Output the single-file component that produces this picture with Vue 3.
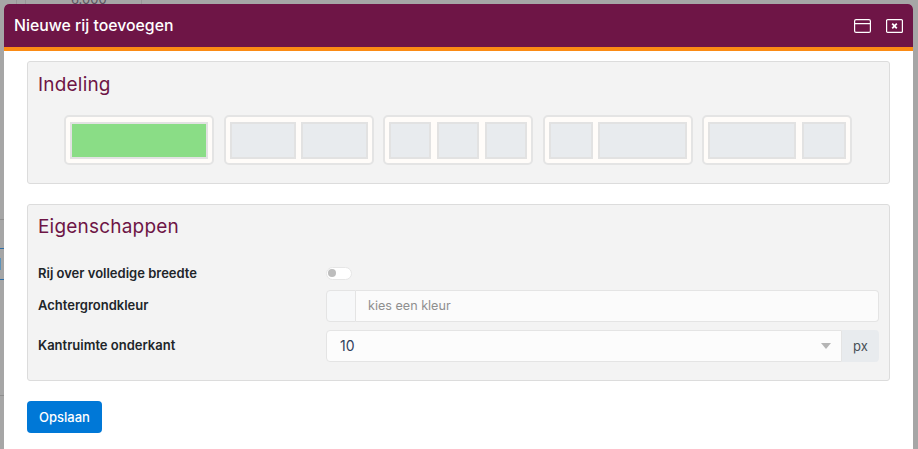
<template>
  <div class="page">
    <div class="backdrop">
      <span class="bg-line line-a"></span>
      <span class="bg-line line-b"></span>
      <span class="bg-line line-c"></span>
      <span class="bg-text">6.000</span>
      <span class="bg-rule rule-a"></span>
      <span class="bg-rule rule-b"></span>
      <span class="bg-rule rule-c blue"></span>
      <span class="bg-rule rule-d blue"></span>
      <span class="bg-mark"></span>
    </div>
    <div class="modal">
      <div class="modal-header">
        <span class="modal-title">Nieuwe rij toevoegen</span>
        <div class="modal-actions">
          <svg width="17" height="14" viewBox="0 0 17 14" fill="none" stroke="#fff" stroke-width="1.2">
            <rect x="0.6" y="0.6" width="15.8" height="12.8" rx="1.5" />
            <path d="M0.6 4.6H16.4" />
          </svg>
          <svg width="17" height="14" viewBox="0 0 17 14" fill="none" stroke="#fff" stroke-width="1.2">
            <rect x="0.6" y="0.6" width="15.8" height="12.8" rx="1" />
            <path d="M6.2 4.7l4.6 4.6M10.8 4.7l-4.6 4.6" stroke-width="1.8" />
          </svg>
        </div>
      </div>
      <div class="modal-body">
        <section class="panel panel-layout">
          <h3>Indeling</h3>
          <div class="layouts">
            <div v-for="(layout, i) in layouts" :key="i" class="layout">
              <div
                v-for="(col, j) in layout.cols"
                :key="j"
                class="col"
                :class="{ active: layout.active }"
                :style="{ flexGrow: col }"
              ></div>
            </div>
          </div>
        </section>

        <section class="panel panel-props">
          <h3>Eigenschappen</h3>
          <div class="form-row row-toggle">
            <label>Rij over volledige breedte</label>
            <div class="field"><span class="switch"><i></i></span></div>
          </div>
          <div class="form-row row-color">
            <label>Achtergrondkleur</label>
            <div class="field input-group">
              <span class="swatch"></span>
              <span class="input placeholder">kies een kleur</span>
            </div>
          </div>
          <div class="form-row row-select">
            <label>Kantruimte onderkant</label>
            <div class="field input-group">
              <span class="select">10<b class="caret"></b></span>
              <span class="addon">px</span>
            </div>
          </div>
        </section>

        <button class="save" type="button">Opslaan</button>
      </div>
    </div>
  </div>
</template>

<script setup>
const layouts = [
  { cols: [1], active: true },
  { cols: [1, 1] },
  { cols: [1, 1, 1] },
  { cols: [1, 2.1] },
  { cols: [2.1, 1] }
]
</script>

<style>
html, body { margin: 0; padding: 0; overflow: hidden; }
</style>

<style scoped>
.page {
  position: relative;
  width: 918px;
  height: 449px;
  overflow: hidden;
  background: #a6a6a6;
  font-family: Inter, "Liberation Sans", sans-serif;
  padding: 4px 5px 0 4px;
  box-sizing: border-box;
}
.backdrop {
  position: absolute;
  inset: 0;
}
.bg-line {
  position: absolute;
  top: 0;
  width: 1px;
  height: 4px;
  background: #979797;
}
.line-a { left: 25px; }
.line-b { left: 141px; }
.line-c { left: 16px; }
.bg-text {
  position: absolute;
  left: 71px;
  top: -8px;
  font-size: 13px;
  line-height: 14px;
  color: #5a5560;
}
.bg-rule {
  position: absolute;
  left: 0;
  width: 4px;
  height: 1px;
  background: #8f8f8f;
}
.bg-rule.blue { background: #2e6da4; }
.rule-a { top: 219px; }
.rule-b { top: 395px; }
.rule-c { top: 248px; }
.rule-d { top: 279px; }
.bg-mark {
  position: absolute;
  left: 0;
  top: 258px;
  width: 1px;
  height: 12px;
  background: #5d93ba;
}
.modal {
  position: relative;
  height: 460px;
  background: #fff;
  border-radius: 5px 5px 0 0;
  overflow: hidden;
}
.modal-header {
  height: 43px;
  background: #6e1546;
  border-bottom: 4px solid #fb8b14;
  display: flex;
  align-items: center;
  justify-content: space-between;
  padding: 0 10px;
  color: #fff;
}
.modal-title {
  font-size: 15.8px;
  font-weight: 500;
}
.modal-actions {
  display: flex;
  gap: 15px;
}
.modal-body {
  padding: 10px 23px 0 23px;
}
.panel {
  background: #f3f3f3;
  border: 1px solid #dcdcdc;
  border-radius: 3px;
  padding: 0 10px;
  box-sizing: border-box;
}
.panel h3 {
  margin: 0;
  font-size: 19px;
  font-weight: 400;
  color: #6e1546;
  line-height: 23px;
  letter-spacing: 0.2px;
}
.panel-layout {
  height: 123px;
  padding-top: 11px;
}
.panel-props {
  height: 177px;
  margin-top: 20px;
  padding-top: 10px;
}
.layouts {
  display: flex;
  justify-content: center;
  gap: 9.5px;
  margin-top: 19px;
  padding-right: 1px;
}
.layout {
  width: 150px;
  height: 50px;
  box-sizing: border-box;
  display: flex;
  gap: 5.5px;
  padding: 5px 4px 4px;
  background: #fffcf9;
  border: 2px solid #e4e4e4;
  border-radius: 5px;
}
.col {
  flex: 1 1 0;
  background: #e8ebee;
  border: 2px solid #e2e2e2;
}
.col.active {
  background: #8add86;
}
.form-row {
  display: flex;
  align-items: center;
}
.form-row label {
  width: 288px;
  flex: none;
  font-size: 13px;
  font-weight: 600;
  color: #212529;
}
.row-color label,
.row-select label {
  padding-bottom: 2px;
}
.field { flex: 1; display: flex; }
.row-toggle { margin-top: 23px; height: 24px; }
.row-color { height: 32px; margin-top: 5px; }
.row-select { height: 32px; margin-top: 8px; }
.switch {
  position: relative;
  width: 26px;
  height: 13px;
  box-sizing: border-box;
  background: #fff;
  border: 1px solid #e6e6e6;
  border-radius: 7px;
}
.switch i {
  position: absolute;
  left: 1px;
  top: 1.5px;
  width: 8px;
  height: 8px;
  border-radius: 50%;
  background: #bdbdbd;
}
.input-group { height: 32px; }
.swatch {
  width: 30px;
  box-sizing: border-box;
  background: #f7f8f9;
  border: 1px solid #e4e4e4;
  border-radius: 4px 0 0 4px;
}
.input {
  flex: 1;
  box-sizing: border-box;
  background: #fbfbfb;
  border: 1px solid #e4e4e4;
  border-left: 0;
  border-radius: 0 4px 4px 0;
  padding-left: 12px;
  font-size: 12.6px;
  line-height: 30px;
}
.placeholder { color: #8f8f8f; }
.select {
  position: relative;
  flex: 1;
  box-sizing: border-box;
  background: #fcfcfc;
  border: 1px solid #e4e4e4;
  border-radius: 4px 0 0 4px;
  padding-left: 13px;
  font-size: 14px;
  line-height: 30px;
  color: #33415c;
}
.caret {
  position: absolute;
  right: 10px;
  top: 12px;
  border: 5px solid transparent;
  border-top: 6px solid #b5b5b5;
  border-bottom: 0;
}
.addon {
  width: 37px;
  box-sizing: border-box;
  background: #e8ebee;
  border-radius: 0 4px 4px 0;
  text-align: center;
  font-size: 13px;
  line-height: 32px;
  color: #495057;
}
.save {
  display: block;
  margin-top: 20px;
  width: 75px;
  height: 32px;
  padding: 0;
  background: #0078d7;
  border: 0;
  border-radius: 4px;
  color: #fff;
  font-family: inherit;
  font-size: 13px;
  font-weight: 500;
}
</style>
